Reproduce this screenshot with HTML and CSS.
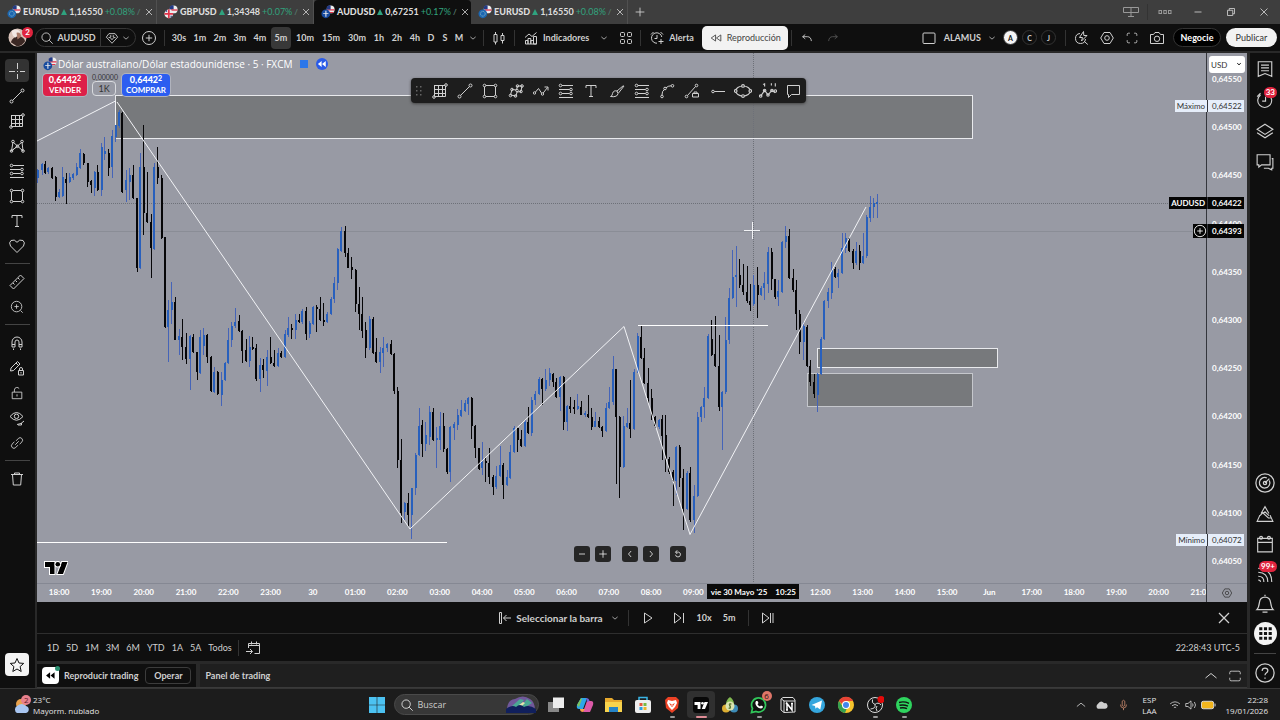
FILE: index.html
```html
<!DOCTYPE html>
<html lang="es">
<head>
<meta charset="utf-8">
<title>AUDUSD</title>
<link rel="stylesheet" href="styles.css">
</head>
<body>
<svg class="defs" aria-hidden="true">
  <defs>
    <symbol id="close" viewBox="0 0 16 16"><path d="M4 4l8 8M12 4l-8 8"/></symbol>
    <symbol id="plus" viewBox="0 0 16 16"><path d="M8 3v10M3 8h10"/></symbol>
    <symbol id="minus" viewBox="0 0 16 16"><path d="M4 8h8"/></symbol>
    <symbol id="down" viewBox="0 0 16 16"><path d="M4.500 6.500L8 9.500l3.500-3"/></symbol>
    <symbol id="up" viewBox="0 0 16 16"><path d="M2.500 10L8 5.500l5.500 4.500"/></symbol>
    <symbol id="left" viewBox="0 0 16 16"><path d="M9.500 4L6 8l3.500 4"/></symbol>
    <symbol id="right" viewBox="0 0 16 16"><path d="M6.500 4L10 8l-3.500 4"/></symbol>
    <symbol id="reset" viewBox="0 0 16 16"><path d="M5 5.500h4a3.300 3.300 0 1 1-4.300 3.500M7 3L4.700 5.500 7 8"/></symbol>
    <symbol id="search" viewBox="0 0 16 16"><circle cx="7" cy="7" r="4.800"/><path d="M10.500 10.500l4 4"/></symbol>
    <symbol id="gem" viewBox="0 0 16 16"><path d="M4.500 3h7l3 4L8 14 1.500 7zM4 7.500h2l2 2.500 2-2.500h2M5.500 5.500h1.500M9 5.500h1.500M6 7.500l1-2M10 7.500l-1-2"/></symbol>
    <symbol id="pluscircle" viewBox="0 0 16 16"><circle cx="8" cy="8" r="6.500"/><path d="M8 4.800v6.400M4.800 8h6.400"/></symbol>
    <symbol id="candles" viewBox="0 0 16 16"><path d="M3 4.500h3v7.500H3zM4.500 2v2.500M4.500 12v2.500M10 5.500h3v5h-3zM11.500 3V5.500M11.500 10.500v3"/></symbol>
    <symbol id="indicators" viewBox="0 0 16 16"><path d="M2.500 14v-3.500h2.500v3.500M5 14V8.500h2.800v5.500M7.800 14V10.500h2.700v3.500M10.500 14V6.500h3V14zM2.500 14h11M2 7.500l4-3.500 3 2.500 4.500-4"/></symbol>
    <symbol id="four" viewBox="0 0 16 16"><rect x="2.500" y="2.500" width="4" height="4" rx="1"/><rect x="9.500" y="2.500" width="4" height="4" rx="1"/><rect x="2.500" y="9.500" width="4" height="4" rx="1"/><rect x="9.500" y="9.500" width="4" height="4" rx="1"/></symbol>
    <symbol id="alarm" viewBox="0 0 16 16"><path d="M12.800 7A5.200 5.200 0 1 0 8 13.200M8 5v3.500H5.500M2 4.500L4.500 2M11.500 2L14 4.500M12 9v5M9.500 11.500h5"/></symbol>
    <symbol id="rewind" viewBox="0 0 16 16"><path d="M7.500 4.500v7L2.500 8zM13.500 4.500v7L8.500 8z"/></symbol>
    <symbol id="undo" viewBox="0 0 16 16"><path d="M6 4L3 6.500 6 9M3 6.500h5.500Q12.500 6.500 13 11.500"/></symbol>
    <symbol id="redo" viewBox="0 0 16 16"><path d="M10 4l3 2.500L10 9M13 6.500H7.500Q3.500 6.500 3 11.500"/></symbol>
    <symbol id="layout" viewBox="0 0 16 16"><rect x="2" y="3" width="12" height="10.500" rx="1"/></symbol>
    <symbol id="quick" viewBox="0 0 16 16"><path d="M6 3.500A5 5 0 1 0 11.500 9M10.300 11.500l3.500 3M9.500 1.500L5.500 7.500h3l-1 3.500L13 5.500h-3.200z"/></symbol>
    <symbol id="hex" viewBox="0 0 16 16"><path d="M5 2.500h6L14.300 8 11 13.500H5L1.700 8z"/><circle cx="8" cy="8" r="2.300"/></symbol>
    <symbol id="full" viewBox="0 0 16 16"><path d="M2.500 5.500V4q0-1.500 1.500-1.500h1.500M10.500 2.500H12q1.500 0 1.500 1.500v1.500M13.500 10.500V12q0 1.500-1.500 1.500h-1.500M5.500 13.500H4q-1.500 0-1.500-1.500v-1.500"/></symbol>
    <symbol id="camera" viewBox="0 0 16 16"><path d="M1.500 4.500h3L6 2.500h4l1.500 2h3v9h-13z"/><circle cx="8" cy="8.800" r="2.700"/></symbol>
    <symbol id="cross" viewBox="0 0 16 16"><path d="M8.500 0v6M8.500 11v5M0 8.500h6M11 8.500h5M8 8.500h1"/></symbol>
    <symbol id="trend" viewBox="0 0 16 16"><circle cx="2.500" cy="13.500" r="1.500"/><circle cx="13.500" cy="2.500" r="1.500"/><path d="M3.600 12.400l8.800-8.800"/></symbol>
    <symbol id="gridtool" viewBox="0 0 16 16"><path d="M2.500 2v11.500M2.500 2.500H13M2.500 13.500h11V3M6.500 2.500v11M10.500 2.500v11M2.500 6.500h11M2.500 10.500h11"/><circle cx="14" cy="2" r="1.300"/><circle cx="2" cy="14" r="1.300"/></symbol>
    <symbol id="pattern" viewBox="0 0 16 16"><path d="M2.500 13L4 4l4.500 4L13 4l1 9-5.500-5zM2.500 13l6-5"/><circle cx="4" cy="3.500" r="1.300"/><circle cx="13" cy="3.500" r="1.300"/><circle cx="2.500" cy="13" r="1.300"/><circle cx="14" cy="13" r="1.300"/><circle cx="8.500" cy="8.300" r="1.300"/></symbol>
    <symbol id="fib" viewBox="0 0 16 16"><path d="M4 2.500h11M1 6.500h10.500M4 10.500h7.500M1 14.500h14"/><circle cx="2.500" cy="2.500" r="1.300"/><circle cx="13" cy="6.500" r="1.300"/><circle cx="2.500" cy="10.500" r="1.300"/><circle cx="13" cy="10.500" r="1.300"/></symbol>
    <symbol id="rect" viewBox="0 0 16 16"><rect x="2.500" y="2.500" width="11" height="11"/><g class="knob"><circle cx="2.500" cy="2.500" r="1.300"/><circle cx="13.500" cy="2.500" r="1.300"/><circle cx="2.500" cy="13.500" r="1.300"/><circle cx="13.500" cy="13.500" r="1.300"/></g></symbol>
    <symbol id="text" viewBox="0 0 16 16"><path d="M3 5V2.500h10V5M8 2.500v11M6 13.500h4"/></symbol>
    <symbol id="heart" viewBox="0 0 16 16"><path d="M8 14.500L1.500 8Q-.5 4.500 2 2.500 5.500.8 8 4.300 10.500.8 14 2.500 16.500 4.500 14.500 8z"/></symbol>
    <symbol id="ruler" viewBox="0 0 16 16"><path d="M1 11.500L11.500 1 15 4.500 4.500 15zM4 9l1.500 1.500M6.500 6.500L8 8M9 4l1.500 1.500"/></symbol>
    <symbol id="zoomin" viewBox="0 0 16 16"><circle cx="7.500" cy="7.500" r="6"/><path d="M12 12l2.500 2.500M7.500 5v5M5 7.500h5"/></symbol>
    <symbol id="magnet" viewBox="0 0 16 16"><path d="M3 12V7a5 5 0 0 1 10 0v5h-3V7a2 2 0 0 0-4 0v5zM3 9.500h3M10 9.500h3M4.500 13.500V15M11.500 13.500V15"/></symbol>
    <symbol id="pencillock" viewBox="0 0 16 16"><path d="M1.500 11L2 8l6.500-6.500 2.500 2.500L4.500 10.500zM7 3l2.500 2.500M9.500 10.500h5V15h-5zM10.500 10.500V9a1.500 1.500 0 0 1 3 0v1.500M12 12v1.500"/></symbol>
    <symbol id="lock" viewBox="0 0 16 16"><path d="M2.500 7h11v7.500h-11zM5 7V4.500a3 3 0 0 1 5.500-1.500M8 9.500V12"/></symbol>
    <symbol id="eye" viewBox="0 0 16 16"><path d="M1 6.500Q7.500-1.500 14 6.500 7.500 14 1 6.500zM8 14.500l4-1 3-2.500M9 15h3.500v-2"/><circle cx="7.500" cy="6.300" r="2.200"/></symbol>
    <symbol id="link" viewBox="0 0 16 16"><path d="M7 5.500l2.500-2.700a2.700 2.700 0 0 1 4 4L11 9.500M9 10.500l-2.500 2.700a2.700 2.700 0 0 1-4-4L5 6.500M6 10l4-4"/></symbol>
    <symbol id="trash" viewBox="0 0 16 16"><path d="M2 3.500h12M5.500 3.500V2h5v1.500M3.500 3.500l.8 10.500h7.400l.8-10.500"/></symbol>
    <symbol id="star" viewBox="0 0 16 16"><path d="M8 1.500l2 4.500 4.700.4-3.600 3.200 1.100 4.900L8 12l-4.200 2.500 1.100-4.900L1.300 6.400 6 6z"/></symbol>
    <symbol id="gann" viewBox="0 0 16 16"><path d="M2.500 12L4 6.500l4.500.5 1-4h4.500l-1 5.500-4 .5-1 4z"/><circle cx="2.500" cy="12.500" r="1.300"/><circle cx="4" cy="6.500" r="1.300"/><circle cx="9" cy="7.500" r="1.300"/><circle cx="9.500" cy="3" r="1.300"/><circle cx="14" cy="3" r="1.300"/><circle cx="13" cy="8.500" r="1.300"/><circle cx="7.500" cy="13" r="1.300"/></symbol>
    <symbol id="zig" viewBox="0 0 16 16"><circle cx="1.500" cy="10" r="1.200"/><circle cx="9.500" cy="11" r="1.200"/><path d="M2.500 9l3-3.500 3 4.500M10.200 10L14.500 4.500M11.500 4h3.500v3.500"/></symbol>
    <symbol id="brush" viewBox="0 0 16 16"><path d="M1.500 13.500Q3.500 13 3.500 10.500 4.500 7 8 8q2.500 3-.5 5-2.500 1.200-6 .5zM8 8l6.500-5.500M9.500 10L15 3"/></symbol>
    <symbol id="curve" viewBox="0 0 16 16"><circle cx="3" cy="13.500" r="1.300"/><circle cx="6" cy="5.500" r="1.300"/><circle cx="13.500" cy="2.800" r="1.300"/><path d="M3 12Q3 8 5.300 6.500M7 4.800Q9 2.800 12 2.800"/></symbol>
    <symbol id="trendlock" viewBox="0 0 16 16"><circle cx="2.500" cy="13.500" r="1.300"/><circle cx="12.500" cy="2.500" r="1.300"/><path d="M3.500 12.500l8-9M8.500 10.500h6V14h-6zM10 10.500V9h3v1.500"/></symbol>
    <symbol id="hline" viewBox="0 0 16 16"><circle cx="3" cy="8.500" r="1.300"/><path d="M4.300 8.500H15"/></symbol>
    <symbol id="ellipse" viewBox="0 0 16 16"><ellipse cx="8" cy="8" rx="6.500" ry="4.500"/><g class="knob"><circle cx="1.500" cy="8" r="1.200"/><circle cx="14.500" cy="8" r="1.200"/><circle cx="8" cy="3.500" r="1.200"/><circle cx="8" cy="12.500" r="1.200"/></g></symbol>
    <symbol id="waves" viewBox="0 0 16 16"><path d="M1.500 12.500l3.500-5 3 4 3.500-4 3 2M5 1v3M3.500 2h1.500M11 1v2M14.500 1v3"/><circle cx="1.500" cy="12.500" r="1.100"/><circle cx="5" cy="7.500" r="1.100"/><circle cx="8" cy="11.500" r="1.100"/><circle cx="11.500" cy="7.500" r="1.100"/><circle cx="14.500" cy="8" r="1.100"/></symbol>
    <symbol id="note" viewBox="0 0 16 16"><path d="M2.500 2.500h12v9H6.500L3.500 14.500v-3h-1z"/></symbol>
    <symbol id="news" viewBox="0 0 16 16"><path d="M2 1.500h12v13L8 12l-6 2.500zM4.500 4.500h7M4.500 7h7M4.500 9.500h7"/></symbol>
    <symbol id="clock" viewBox="0 0 16 16"><path d="M8.500 5v4H5.500M11.500 3.500A6.200 6.200 0 1 1 4 3.500M1 5l3-3"/></symbol>
    <symbol id="layers" viewBox="0 0 16 16"><path d="M8 2l7 4.500L8 11 1 6.500zM1 9.500L8 14l7-4.500"/></symbol>
    <symbol id="chat" viewBox="0 0 16 16"><path d="M1 1.500h11.500v9H5L2.500 12.500v-2H1zM14 5h1v8.500h-1V15l-3-1.500H7"/></symbol>
    <symbol id="target" viewBox="0 0 16 16"><circle cx="8" cy="8" r="7.300"/><path d="M11.500 6A4.200 4.200 0 1 1 9.500 4M8 8l3.500-3.500"/><circle cx="8" cy="8" r="1.300"/></symbol>
    <symbol id="pine" viewBox="0 0 16 16"><path d="M4.500 7.500L8 1.500l3.500 6M3.500 9l-2.500 5.500h14L12.500 9M3.500 9.500L6 7l5 4.500h2.500M6.500 7.500L8 6l3.500 3.500"/></symbol>
    <symbol id="cal" viewBox="0 0 16 16"><path d="M1.500 3h13v12h-13zM1.500 6.500h13"/><circle cx="4.500" cy="2.500" r="1.300"/><circle cx="11.500" cy="2.500" r="1.300"/></symbol>
    <symbol id="stream" viewBox="0 0 16 16"><path d="M2 13.500a1.500 1.500 0 0 1 2 1.500M2 10q5 0 5 5M2 6.500q8.500.5 8.500 8.500M2 3q12 .5 12 12"/></symbol>
    <symbol id="bell" viewBox="0 0 16 16"><path d="M1.500 12.500h13Q13 11 12.500 7 12 2.500 8 2.500T3.500 7Q3 11 1.500 12.500zM6 14.500h4M7.500 1h1"/></symbol>
    <symbol id="help" viewBox="0 0 16 16"><circle cx="8" cy="8" r="7.300"/><path d="M5.700 6.300Q5.800 4 8 4t2.300 2q0 1.200-1.300 2-1 .6-1 1.700M8 11.500v1"/></symbol>
    <symbol id="play" viewBox="0 0 16 16"><path d="M4.500 3v10L12 8z"/></symbol>
    <symbol id="step" viewBox="0 0 16 16"><path d="M3.500 3v10L10 8zM12.500 3v10"/></symbol>
    <symbol id="toend" viewBox="0 0 16 16"><path d="M2.500 3v10L9 8zM10.500 3v10M13 3v10"/></symbol>
    <symbol id="selbar" viewBox="0 0 16 16"><path d="M2.500 2.500h2v11h-2zM6.500 8H14M9.500 5L6.500 8l3 3"/></symbol>
    <symbol id="goto" viewBox="0 0 16 16"><path d="M3.500 8V3.500h11v10H9.500M3.500 5.500h11M6.500 1.500v3M11.500 1.500v3M1 11.500h6M5 9l2.500 2.500L5 14"/></symbol>
    <symbol id="maximize" viewBox="0 0 16 16"><path d="M2 6V4q0-1.500 1.500-1.500H5.500M10.500 2.500h2Q14 2.500 14 4v2M14 10v2q0 1.500-1.500 1.500h-2M5.500 13.500h-2Q2 13.500 2 12v-2M5.500 2.500h5M5.500 13.500h5"/></symbol>
    <symbol id="tv" viewBox="0 0 24 14"><path class="solid" d="M1 1h9.500v12H6V6H1zM18 1h5.500L19 13h-5.500z"/><circle class="solid" cx="13.800" cy="3.200" r="2.300"/></symbol>
    <symbol id="pair" viewBox="0 0 16 16"><circle class="f-white" cx="11" cy="5" r="4.500"/><path class="f-red" d="M8 1.800h5M7 4.800h8.500v1.500H7zM9 8h5v1.200H9z"/><path class="f-navy" d="M6.500 2Q9 0 11 .5V5H6.500z"/><circle class="f-blue" cx="5.500" cy="10" r="5"/><path class="f-white" d="M5 6.500h1.200v7H5zM2.500 9.300h6v1h-6z"/></symbol>
    <symbol id="pairgbp" viewBox="0 0 16 16"><circle class="f-white" cx="11" cy="5" r="4.500"/><path class="f-navy" d="M6.500 2Q9 0 11 .5V5H6.500z"/><path class="f-red" d="M8 5h7.500v1.500H8z"/><circle class="f-white" cx="5.500" cy="10" r="5"/><path class="f-red" d="M4.500 5h2v10h-2zM.5 9h10v2H.5z"/><path class="f-navy" d="M1.500 7l2-1.500V8zM7.500 12v2.500l2-2z"/></symbol>
    <symbol id="paireur" viewBox="0 0 16 16"><circle class="f-white" cx="11" cy="5" r="4.500"/><path class="f-navy" d="M6.500 2Q9 0 11 .5V5H6.500z"/><path class="f-red" d="M8 5h7.500v1.500H8z"/><circle class="f-eu" cx="5.500" cy="10" r="5"/><circle class="stars" cx="5.500" cy="10" r="2.700"/></symbol>
  </defs>
</svg>

<nav class="tabs">
  <div class="tab"><svg class="flag"><use href="#paireur"/></svg><b>EURUSD</b><i class="tri"></i><span>1,16550</span><em>+0.08%</em><small>/</small><button aria-label="Cerrar"><svg class="icon s12"><use href="#close"/></svg></button></div>
  <div class="tab"><svg class="flag"><use href="#pairgbp"/></svg><b>GBPUSD</b><i class="tri"></i><span>1,34348</span><em>+0.07%</em><small>/</small><button aria-label="Cerrar"><svg class="icon s12"><use href="#close"/></svg></button></div>
  <div class="tab active"><svg class="flag"><use href="#pair"/></svg><b>AUDUSD</b><i class="tri"></i><span>0,67251</span><em>+0.17%</em><small>/</small><button aria-label="Cerrar"><svg class="icon s12"><use href="#close"/></svg></button></div>
  <div class="tab"><svg class="flag"><use href="#paireur"/></svg><b>EURUSD</b><i class="tri"></i><span>1,16550</span><em>+0.08%</em><small>/</small><button aria-label="Cerrar"><svg class="icon s12"><use href="#close"/></svg></button></div>
  <button class="newtab" aria-label="Nueva pestaña"><svg class="icon s14"><use href="#plus"/></svg></button>
  <div class="window">
    <button aria-label="Paneles"><svg class="icon s16 dim" viewBox="0 0 16 16"><path d="M.5 3.500h15v5H.5zM8 3.500v9M5 12.500h6"/></svg></button><i class="vsep"></i>
    <button aria-label="Más"><svg class="icon s16 dim" viewBox="0 0 16 16"><rect x="2" y="6.500" width="2.500" height="3"/><rect x="6.800" y="6.500" width="2.500" height="3"/><rect x="11.500" y="6.500" width="2.500" height="3"/></svg></button>
    <button aria-label="Minimizar"><svg class="icon s14"><use href="#minus"/></svg></button>
    <button aria-label="Restaurar"><svg class="icon s14" viewBox="0 0 16 16"><path d="M4 6h6v6H4zM6 6V4h6v6h-2"/></svg></button>
    <button aria-label="Cerrar ventana"><svg class="icon s14"><use href="#close"/></svg></button>
  </div>
</nav>

<header class="toolbar">
  <button class="avatar" aria-label="Perfil"><svg viewBox="0 0 20 20"><circle cx="10" cy="10" r="9.500" fill="#d8c2b8"/><path d="M3 15Q5 9 11 9t7 5Q14 20 9 19z" fill="#3b2824"/><path d="M4 3Q9-.5 13 4L8 10Q4 9 4 3z" fill="#f2e8e4"/><path d="M9 5q4-1 5 4l-4 3z" fill="#a87867"/></svg><span class="badge">2</span></button>
  <div class="symbol"><button class="find"><svg class="icon s14"><use href="#search"/></svg>AUDUSD</button><button class="gem" aria-label="Producto"><svg class="icon s14"><use href="#gem"/></svg><svg class="icon s12"><use href="#down"/></svg></button></div>
  <button class="ib" aria-label="Añadir"><svg class="icon s16"><use href="#pluscircle"/></svg></button><i class="vsep"></i>
  <button class="tf">30s</button><button class="tf">1m</button><button class="tf">2m</button><button class="tf">3m</button><button class="tf">4m</button><button class="tf on">5m</button><button class="tf l">10m</button><button class="tf l">15m</button><button class="tf l">30m</button><button class="tf h">1h</button><button class="tf h">2h</button><button class="tf h">4h</button><button class="tf d">D</button><button class="tf d">S</button><button class="tf d">M</button><button class="tf d" aria-label="Intervalos"><svg class="icon s12"><use href="#down"/></svg></button>
  <i class="vsep"></i><button class="ib big" aria-label="Velas"><svg class="icon s16"><use href="#candles"/></svg></button><i class="vsep flush"></i>
  <button class="ind"><svg class="icon s16"><use href="#indicators"/></svg>Indicadores</button><button class="ib sm" aria-label="Favoritos"><svg class="icon s12"><use href="#down"/></svg></button><button class="ib sm" aria-label="Plantillas"><svg class="icon s16"><use href="#four"/></svg></button><i class="vsep"></i>
  <button class="alert"><svg class="icon s16"><use href="#alarm"/></svg>Alerta</button>
  <button class="replay"><svg class="icon s14"><use href="#rewind"/></svg>Reproducción</button><i class="vsep"></i>
  <button class="ib big" aria-label="Deshacer"><svg class="icon s14"><use href="#undo"/></svg></button><button class="ib sm dim" aria-label="Rehacer"><svg class="icon s14"><use href="#redo"/></svg></button>
  <div class="right">
    <button class="ib" aria-label="Diseño"><svg class="icon s16"><use href="#layout"/></svg></button><button class="name">ALAMUS</button><button class="ib xs" aria-label="Diseños"><svg class="icon s12"><use href="#down"/></svg></button>
    <button class="dot on">A</button><button class="dot">C</button><button class="dot">J</button><i class="vsep"></i>
    <button class="ib" aria-label="Búsqueda rápida"><svg class="icon s16"><use href="#quick"/></svg></button><button class="ib" aria-label="Ajustes"><svg class="icon s16"><use href="#hex"/></svg></button><button class="ib" aria-label="Pantalla completa"><svg class="icon s14"><use href="#full"/></svg></button><button class="ib" aria-label="Captura"><svg class="icon s16"><use href="#camera"/></svg></button>
    <button class="trade">Negocie</button><button class="publish">Publicar</button>
  </div>
</header>

<div class="work">
  <aside class="tools">
    <button class="on" aria-label="Cursor"><svg class="icon s16"><use href="#cross"/></svg></button>
    <button aria-label="Líneas"><svg class="icon s16"><use href="#trend"/></svg></button>
    <button aria-label="Gann"><svg class="icon s16"><use href="#gridtool"/></svg></button>
    <button aria-label="Patrones"><svg class="icon s16"><use href="#pattern"/></svg></button>
    <button aria-label="Fibonacci"><svg class="icon s16"><use href="#fib"/></svg></button>
    <button aria-label="Formas"><svg class="icon s16"><use href="#rect"/></svg></button>
    <button aria-label="Texto"><svg class="icon s16"><use href="#text"/></svg></button>
    <button aria-label="Iconos"><svg class="icon s16"><use href="#heart"/></svg></button>
    <hr>
    <button aria-label="Regla"><svg class="icon s16"><use href="#ruler"/></svg></button>
    <button aria-label="Acercar"><svg class="icon s14"><use href="#zoomin"/></svg></button>
    <hr>
    <button aria-label="Imán"><svg class="icon s16"><use href="#magnet"/></svg></button>
    <button aria-label="Modo dibujo"><svg class="icon s16"><use href="#pencillock"/></svg></button>
    <button aria-label="Bloquear"><svg class="icon s14"><use href="#lock"/></svg></button>
    <button aria-label="Ocultar"><svg class="icon s16"><use href="#eye"/></svg></button>
    <button aria-label="Enlazar"><svg class="icon s14"><use href="#link"/></svg></button>
    <hr>
    <button aria-label="Eliminar"><svg class="icon s16"><use href="#trash"/></svg></button>
    <button class="fav" aria-label="Favoritos"><svg class="icon s16"><use href="#star"/></svg></button>
  </aside>

  <main class="center">
    <section class="chart">
      <div class="pane">
        <svg id="plot" viewBox="37 53 1169 530" preserveAspectRatio="none">
          <g class="zone"><rect x="115.500" y="95.500" width="857" height="43"/><rect x="817.500" y="348.500" width="180" height="19"/><rect class="soft" x="807.500" y="373.500" width="165" height="33"/></g>
          <path class="guide" d="M37 203.500H1206"/><path class="guide faint" d="M37 231.500H1206"/><path class="guide" d="M753.500 53V583"/>
          <g id="bars"></g>
          <path class="draw" d="M37 141L115.500 101V125M117 102L410 529 624 326.500 690 534.500 866 207"/>
          <path class="draw strong" d="M37 542.500H447M638 325.500H768"/>
          <path class="draw" d="M744 230.500H760M752.500 222V239"/>
        </svg>
        <div class="legend"><svg class="flag"><use href="#pair"/></svg><h1>Dólar australiano/Dólar estadounidense · 5 · FXCM</h1><i class="mark"></i><i class="round"><svg viewBox="0 0 16 16"><path d="M7.500 4v8L2.500 8zM13 4v8L8 8z" fill="#fff"/></svg></i></div>
        <div class="order"><button class="sell"><b>0,6442<sup>2</sup></b>VENDER</button><div class="spread"><span>0,00000</span><button>1K</button></div><button class="buy"><b>0,6442<sup>2</sup></b>COMPRAR</button></div>
        <div class="favbar"><svg class="grip" viewBox="0 0 8 12"><path d="M1 1h1.500v1.500H1zM5 1h1.500v1.500H5zM1 5h1.500v1.500H1zM5 5h1.500v1.500H5zM1 9h1.500v1.500H1zM5 9h1.500v1.500H5z"/></svg>
          <button aria-label="Gann"><svg class="icon s16"><use href="#gridtool"/></svg></button><button aria-label="Tendencia"><svg class="icon s16"><use href="#trend"/></svg></button><button aria-label="Rectángulo"><svg class="icon s16"><use href="#rect"/></svg></button><button aria-label="Trazado"><svg class="icon s16"><use href="#gann"/></svg></button><button aria-label="Ruta"><svg class="icon s16"><use href="#zig"/></svg></button><button aria-label="Retroceso"><svg class="icon s16"><use href="#fib"/></svg></button><button aria-label="Texto"><svg class="icon s16"><use href="#text"/></svg></button><button aria-label="Pincel"><svg class="icon s16"><use href="#brush"/></svg></button><button aria-label="Extensión"><svg class="icon s16"><use href="#fib"/></svg></button><button aria-label="Curva"><svg class="icon s16"><use href="#curve"/></svg></button><button aria-label="Ángulo"><svg class="icon s16"><use href="#trendlock"/></svg></button><button aria-label="Horizontal"><svg class="icon s16"><use href="#hline"/></svg></button><button aria-label="Elipse"><svg class="icon s18"><use href="#ellipse"/></svg></button><button aria-label="Ondas"><svg class="icon s18"><use href="#waves"/></svg></button><button aria-label="Nota"><svg class="icon s16"><use href="#note"/></svg></button>
        </div>
        <div class="nav"><button aria-label="Alejar"><svg class="icon s12"><use href="#minus"/></svg></button><button aria-label="Acercar"><svg class="icon s12"><use href="#plus"/></svg></button><button class="gap" aria-label="Izquierda"><svg class="icon s12"><use href="#left"/></svg></button><button aria-label="Derecha"><svg class="icon s12"><use href="#right"/></svg></button><button class="gap" aria-label="Restablecer"><svg class="icon s12"><use href="#reset"/></svg></button></div>
        <svg class="logo"><use href="#tv"/></svg>
      </div>
      <div class="prices">
        <span>0,64550</span><span>0,64500</span><span>0,64450</span><span>0,64400</span><span>0,64350</span><span>0,64300</span><span>0,64250</span><span>0,64200</span><span>0,64150</span><span>0,64100</span><span>0,64050</span>
        <select aria-label="Moneda"><option>USD</option></select>
        <svg class="caret" viewBox="0 0 16 16"><use href="#down"/></svg>
        <div class="tag high"><span>Máximo</span><b>0,64522</b></div>
        <div class="tag dark last"><span>AUDUSD</span><b>0,64422</b></div>
        <div class="tag dark hover"><span><svg class="icon s14"><use href="#pluscircle"/></svg></span><b>0,64393</b></div>
        <div class="tag low"><span>Mínimo</span><b>0,64072</b></div>
      </div>
      <div class="times"><div class="hours"><span>18:00</span><span>19:00</span><span>20:00</span><span>21:00</span><span>22:00</span><span>23:00</span><span>30</span><span>01:00</span><span>02:00</span><span>03:00</span><span>04:00</span><span>05:00</span><span>06:00</span><span>07:00</span><span>08:00</span><span>09:00</span><span></span><span></span><span>12:00</span><span>13:00</span><span>14:00</span><span>15:00</span><span>Jun</span><span>17:00</span><span>18:00</span><span>19:00</span><span>20:00</span><span>21:00</span></div><div class="now"><span>vie 30 Mayo '25</span><span>10:25</span></div></div>
      <button class="corner" aria-label="Ajustes del eje"><svg class="icon s12"><use href="#hex"/></svg></button>
    </section>

    <section class="playbar">
      <div class="group"><button class="sel"><svg class="icon s16"><use href="#selbar"/></svg>Seleccionar la barra</button><button class="ib" aria-label="Opciones"><svg class="icon s12"><use href="#down"/></svg></button><i class="vsep"></i><button class="ib wider" aria-label="Reproducir"><svg class="icon s16"><use href="#play"/></svg></button><button class="ib" aria-label="Avanzar"><svg class="icon s16"><use href="#step"/></svg></button><button class="ib">10x</button><button class="ib">5m</button><i class="vsep late"></i><button class="ib wider" aria-label="Ir al final"><svg class="icon s16"><use href="#toend"/></svg></button></div>
      <button class="x" aria-label="Cerrar"><svg class="icon s20"><use href="#close"/></svg></button>
    </section>
    <section class="ranges"><button>1D</button><button>5D</button><button>1M</button><button>3M</button><button>6M</button><button>YTD</button><button>1A</button><button>5A</button><button>Todos</button><i class="vsep"></i><button aria-label="Ir a"><svg class="icon s16"><use href="#goto"/></svg></button><time>22:28:43 UTC-5</time></section>
    <section class="panels"><div class="p1"><i class="app"><svg viewBox="0 0 16 16"><path d="M7.500 4v8L2.500 8zM13 4v8L8 8z"/></svg></i>Reproducir trading<button>Operar</button></div><div class="p2">Panel de trading</div><div class="p3"><button aria-label="Abrir"><svg class="icon s16"><use href="#up"/></svg></button><button aria-label="Maximizar"><svg class="icon s14"><use href="#maximize"/></svg></button></div></section>
  </main>

  <aside class="side">
    <button aria-label="Lista"><svg class="icon s18"><use href="#news"/></svg></button>
    <button aria-label="Alertas"><svg class="icon s18"><use href="#clock"/></svg><span class="badge">33</span></button>
    <button aria-label="Objetos"><svg class="icon s18"><use href="#layers"/></svg></button>
    <button aria-label="Chat"><svg class="icon s18"><use href="#chat"/></svg></button>
    <button class="push" aria-label="Filtro"><svg class="icon s20"><use href="#target"/></svg></button>
    <button aria-label="Pine"><svg class="icon s18"><use href="#pine"/></svg></button>
    <button aria-label="Calendario"><svg class="icon s18"><use href="#cal"/></svg></button>
    <button aria-label="Transmisiones"><svg class="icon s18"><use href="#stream"/></svg><span class="badge">99+</span></button>
    <button aria-label="Avisos"><svg class="icon s20"><use href="#bell"/></svg></button>
    <button aria-label="Productos"><svg class="apps" viewBox="0 0 22 22"><circle cx="11" cy="11" r="11" fill="#f4f4f4"/><path fill="#111" d="M5 5h3v3H5zM9.500 5h3v3h-3zM14 5h3v3h-3zM5 9.500h3v3H5zM9.500 9.500h3v3h-3zM14 9.500h3v3h-3zM5 14h3v3H5zM9.500 14h3v3h-3zM14 14h3v3h-3z"/></svg></button>
    <hr>
    <button aria-label="Ayuda"><svg class="icon s20"><use href="#help"/></svg></button>
  </aside>
</div>

<footer class="taskbar">
  <div class="weather"><svg viewBox="0 0 20 20"><circle cx="9" cy="9" r="5" fill="#e8a24d"/><path d="M5 18a4 4 0 0 1 0-7q5-4 9 0a3.600 3.600 0 0 1 0 7z" fill="#a9c6f1"/><circle cx="14" cy="5" r="5" fill="#e8818d"/></svg><span class="count">2</span><p><span>23°C</span><span>Mayorm. nublado</span></p></div>
  <div class="apps-row">
    <button aria-label="Inicio"><svg viewBox="0 0 18 18"><path fill="#4cc2f1" d="M1 1h7.700v7.700H1zM9.300 1H17v7.700H9.300zM1 9.300h7.700V17H1zM9.300 9.300H17V17H9.300z"/></svg></button>
    <label class="search"><svg class="icon s14"><use href="#search"/></svg><input type="text" placeholder="Buscar" aria-label="Buscar"><svg class="aurora" viewBox="0 0 30 17"><path fill="#70589a" d="M1 14Q1 4 9 3q8-5 15 0 5 3 5 11z"/><path fill="#4ba894" d="M6 10L14 3l4 1-7 8zM15 10l6-7 5 4-8 5z"/><path fill="#e7e7b0" d="M13 9l4-3 2 1-4 4z"/><path fill="#101f5c" d="M0 17V13q6-5 10-2 4-4 8 0 5-3 12 2v4z"/></svg></label>
    <button aria-label="Vista de tareas"><svg viewBox="0 0 18 18"><path fill="#888" d="M1 6h11v10H1z"/><path fill="#ededed" d="M6 1.500h11V12H6z"/></svg></button>
    <button aria-label="Copilot"><svg viewBox="0 0 18 18"><path fill="#2da7e8" d="M5 2h6L7 13H3Q0 13 1 9z"/><path fill="#7dc45d" d="M5 2L1 9l2 2 3-8z"/><path fill="#dc5aa8" d="M11 5h4q3 0 2 4l-3 7H7z"/><path fill="#f6a14b" d="M4 13h5l-2 3q-3 0-3-3z"/><path fill="#7362db" d="M10 2q3 0 3.500 3L11 6z"/></svg></button>
    <button aria-label="Explorador"><svg viewBox="0 0 18 18"><path fill="#e7a92d" d="M0 2h7l2 2h8v6H0z"/><path fill="#f8d34d" d="M0 6h17v10H0z"/><path fill="#2684c7" d="M4 11h9v5H4z"/></svg></button>
    <button aria-label="Tienda"><svg viewBox="0 0 18 18"><path fill="none" stroke="#3ab5e5" stroke-width="1.500" d="M5 5V1.500h8V5"/><rect x="1" y="4" width="16" height="13" rx="2" fill="#eee"/><path fill="#e6553c" d="M5.500 7h3v3h-3z"/><path fill="#79b843" d="M9.500 7h3v3h-3z"/><path fill="#2b9ee0" d="M5.500 11h3v3h-3z"/><path fill="#eab52d" d="M9.500 11h3v3h-3z"/></svg></button>
    <button class="run" aria-label="Brave"><svg viewBox="0 0 18 18"><path fill="#ed4225" d="M5 1h8l3 3-1 8-6 5-6-5-1-8z"/><path fill="#fff" d="M5 4l4 1 4-1 1 3-2 4-3 3-3-3-2-4z"/><path fill="#ed4225" d="M6 7l2 1v2zM12 7l-2 1v2zM8.500 8h1v3h-1z"/></svg></button>
    <button class="run now-app" aria-label="TradingView"><svg viewBox="0 0 18 18"><rect x="1" y="1" width="16" height="16" rx="3" fill="#080808"/><path fill="#fff" d="M2.500 6h6v7H5.600V9H2.500zM12.500 6h3.500l-3 7H9.800z"/><circle cx="10.500" cy="7.300" r="1.300" fill="#fff"/></svg></button>
    <button aria-label="Metatrader"><svg viewBox="0 0 18 18"><circle cx="5" cy="12.500" r="4" fill="#dcae32"/><circle cx="13" cy="12.500" r="4" fill="#3d8cb8"/><path fill="#83ba52" d="M9 1q4 3 4 7H5q0-4 4-7z"/><circle cx="9" cy="10" r="4.500" fill="#dbe4b0"/><path d="M10.500 8H8.500q-1 1 .5 2t0 2.200H7.500M9 7v6" stroke="#56732f" fill="none"/></svg></button>
    <button class="run" aria-label="WhatsApp"><svg viewBox="0 0 18 18"><path fill="#111" stroke="#31c65a" stroke-width="1.700" d="M1.500 16.500l1-4A7 7 0 1 1 6 15.500z"/><path fill="#fff" d="M6 5l1.500 0L8.500 7l-1 1.200q1 1.700 2.500 2.200l1-1 2 1q0 2-2 2Q6 12 5.300 7z"/></svg><span class="count">6</span></button>
    <button aria-label="Notion"><svg viewBox="0 0 18 18"><path fill="#151515" stroke="#ddd" d="M2 3l2-1.500h10L16 4v12L5 16.500 2 14z"/><path fill="none" stroke="#ddd" d="M2.500 3L5 5v11.500M5 5h11"/><path fill="none" stroke="#fff" stroke-width="1.500" d="M8 14V7.500l5 6.500V7.500M6.700 7.500h2M12 7.500h2M7 14h2"/></svg></button>
    <button aria-label="Telegram"><svg viewBox="0 0 18 18"><circle cx="9" cy="9" r="8" fill="#35a6dd"/><path fill="#fff" d="M3.500 9L14 4.500 12.300 13.500 9 11.200 7.500 12.800 7 10z"/></svg></button>
    <button aria-label="Chrome"><svg viewBox="0 0 18 18"><circle cx="9" cy="9" r="8" fill="#f6c42d"/><path fill="#e74335" d="M2 5a8 8 0 0 1 14 0H9L6 9z"/><path fill="#34a050" d="M2 5l4 6 4 1-2 5A8 8 0 0 1 2 5z"/><circle cx="9" cy="9" r="4" fill="#fff"/><circle cx="9" cy="9" r="3" fill="#4286ed"/></svg></button>
    <button class="run" aria-label="OBS"><svg viewBox="0 0 18 18"><circle cx="9" cy="9" r="7.500" fill="#171717" stroke="#ddd"/><path fill="none" stroke="#ddd" d="M9 8.500Q5 7 6.500 3.500M9 8.500q3-3 6 .5M9 8.500q1 4-4.500 4.500M11 15q-2-3 0-5"/><circle cx="15" cy="3.500" r="3.500" fill="#e50a0a"/></svg></button>
    <button class="run" aria-label="Spotify"><svg viewBox="0 0 18 18"><circle cx="9" cy="9" r="8" fill="#2ed45e"/><path fill="none" stroke="#111" stroke-width="1.400" d="M4 6.500q5-1.500 10 .8M4.500 9.300q4.500-1 8.500.8M5 12q4-.8 7 .6"/></svg></button>
  </div>
  <div class="tray"><svg class="icon s12"><use href="#up"/></svg><svg class="pic first" viewBox="0 0 14 12"><path fill="#cfcfcf" d="M3 10a3 3 0 0 1 0-5q3-5 7-1a3 3 0 0 1 1 6z"/></svg><svg class="pic" viewBox="0 0 14 14"><path fill="none" stroke="#c4866b" d="M5.500 2.500q1.500-2 3 0v5q-1.500 2-3 0zM3.500 6.500q0 4 3.500 4t3.500-4M7 10.500V13"/></svg><p><span>ESP</span><span>LAA</span></p><svg class="icon s12" viewBox="0 0 16 16"><path d="M1.500 6.500q6.500-5.500 13 0M4 9q4-3.500 8 0M6.500 11.500q1.500-1.500 3 0"/></svg><svg class="icon s12" viewBox="0 0 16 16"><path d="M1 6h3l4-3.500v11L4 10H1zM10 6q1.500 2 0 4M12.500 4q3 4 0 8"/></svg><svg class="bat" viewBox="0 0 16 10"><rect x=".5" y="1" width="13" height="8" rx="2" fill="#f2b51d" stroke="#ddd"/><path d="M15 3.500v3" stroke="#ddd"/></svg><p class="date"><span>22:28</span><span>19/01/2026</span></p></div>
</footer>
<script src="chart.js"></script>
</body>
</html>
```
FILE: styles.css
```css
* { box-sizing: border-box; }
html, body { height: 100%; }
body { margin: 0; display: flex; flex-direction: column; background: #0f0f0f; color: #d0d0d0; font: 700 9px/12px Lato, "Open Sans", sans-serif; overflow: hidden; }
button { font: inherit; color: inherit; background: none; border: 0; padding: 0; margin: 0; display: flex; align-items: center; justify-content: center; white-space: nowrap; flex: none; }
.defs { position: absolute; width: 0; height: 0; }
svg { display: block; flex: none; }
.icon { fill: none; stroke: currentColor; stroke-width: 1; }
.s12 { width: 12px; height: 12px; } .s14 { width: 14px; height: 14px; } .s16 { width: 16px; height: 16px; } .s18 { width: 18px; height: 18px; } .s20 { width: 20px; height: 20px; }
.dim { color: #7d7d7d; }
.knob { fill: #141414; }
.solid { fill: #000; stroke: #fff; stroke-width: 2; paint-order: stroke; }
.f-white { fill: #eee; stroke: none; } .f-red { fill: #e0344b; stroke: none; } .f-navy { fill: #233a86; stroke: none; } .f-blue { fill: #164a9e; stroke: none; } .f-eu { fill: #1c66b0; stroke: none; }
.stars { fill: none; stroke: #9fc5c9; stroke-dasharray: 1 1; }
.flag { width: 14px; height: 14px; }
.vsep { width: 1px; height: 16px; background: #333; flex: none; }
.badge { position: absolute; background: #e0243e; color: #fff; border-radius: 6px; font-size: 8px; line-height: 11px; min-width: 11px; padding: 0 2px; text-align: center; }

.tabs { display: flex; height: 24px; background: #3e3e3e; flex: none; }
.tab { display: flex; flex: none; align-items: center; width: 157px; padding: 0 3px 0 7px; border-right: 1px solid #505050; font-size: 9px; gap: 2px; white-space: nowrap; color: #ddd; }
.tab.active { background: #0f0f0f; border-radius: 4px 4px 0 0; border-color: #0f0f0f; }
.tab em { font-style: normal; font-weight: 400; color: #31a27d; }
.tab small { color: #55756b; font-size: 8px; }
.tab button { margin-left: auto; width: 12px; }
.tri { border: 3px solid transparent; border-bottom: 6px solid #2fa37f; border-top: 0; }
.newtab { width: 24px; }
.window { margin-left: auto; display: flex; align-items: center; }
.window button { width: 33px; color: #ccc; }
.window .dim { color: #999; }

.toolbar { display: flex; align-items: center; height: 29px; border-bottom: 2px solid #292929; flex: none; padding-right: 3px; }
.toolbar > .vsep { margin-left: 3px; } .toolbar > .flush { margin-left: 0; }
.avatar { position: relative; width: 35px; }
.avatar svg { width: 19px; height: 19px; }
.avatar .badge { right: 2px; top: -1px; }
.symbol { display: flex; width: 101px; height: 19px; border: 1px solid #363636; border-radius: 10px; }
.find { flex: 1; gap: 3px; } .gem { width: 35px; border-left: 1px solid #363636; gap: 1px; }
.ib { width: 25px; height: 22px; } .ib.wider { width: 38px; } .ib.big { width: 30px; } .ib.sm { width: 22px; } .ib.xs { width: 18px; }
.toolbar .ib.dim { color: #555; }
.tf { width: 20px; height: 22px; border-radius: 4px; } .vsep + .tf { width: 22px; margin-left: 3px; }
.tf.on { background: #383838; margin: 0 1px; } .tf.l { width: 26px; } .tf.h { width: 18px; } .tf.d { width: 14px; }
.ind { gap: 4px; padding: 0 4px 0 8px; } .alert { gap: 4px; padding: 0 8px; }
.replay { background: #f2f2f2; color: #444; width: 86px; height: 24px; border-radius: 5px; gap: 4px; font-weight: 400; }
.right { margin-left: auto; display: flex; align-items: center; }
.name { padding: 0 2px; }
.dot { width: 15px; height: 15px; margin: 0 2px; border: 1px solid #333; border-radius: 8px; font-size: 7px; }
.dot.on { background: #f5f5f5; color: #111; } .dot + .vsep { margin: 0 3px 0 7px; }
.trade { background: #000; border: 1px solid #333; color: #fff; border-radius: 10px; width: 48px; height: 19px; margin: 0 5px 0 4px; }
.publish { background: #f2f2f2; color: #333; border-radius: 10px; width: 51px; height: 19px; font-weight: 400; }

.work { flex: 1; display: flex; min-height: 0; }
.tools { width: 37px; border-right: 2px solid #292929; display: flex; flex-direction: column; align-items: center; padding: 5px 1px 0 0; flex: none; }
.tools button { width: 24px; height: 25px; border-radius: 4px; }
.tools .on { background: #333; height: 23px; margin: 1px 0; }
.tools hr, .side hr { width: 25px; border: 0; border-top: 1px solid #444; margin: 5px 0; }
.tools .fav { margin-top: auto; margin-bottom: 12px; background: #f4f4f4; color: #111; height: 23px; }
.center { flex: 1; min-width: 0; display: flex; flex-direction: column; border-right: 3px solid #292929; }
.chart { flex: 1; min-height: 0; display: grid; grid-template: minmax(0, 1fr) 19px / minmax(0, 1fr) 41px; background: #989aa4; overflow: hidden; }
.pane { position: relative; }
#plot { position: absolute; width: 100%; height: 100%; }
.zone rect { fill: #77797c; stroke: #e9eaed; } .zone .soft { stroke: #c5c7cc; }
.draw { fill: none; stroke: #f2f3f6; } .draw.strong { stroke-width: 1; stroke: #fff; }
.guide { fill: none; stroke: #6d7078; stroke-dasharray: 1 1; } .guide.faint { stroke: #8a8d96; stroke-dasharray: none; }
.rise { stroke: #2860bd; } .fall { stroke: #060608; }
.wick { stroke-width: 1; } .body { stroke-width: 2; }
.wick.rise { stroke: #4564b8; }
.legend { position: relative; display: flex; align-items: center; gap: 1px; padding: 4px 0 0 6px; color: #fff; }
h1 { font: 500 10px/14px "Open Sans", sans-serif; margin: 0; white-space: nowrap; }
.mark { width: 8px; height: 8px; background: #2c77ea; margin: 0 7px; }
.round { width: 12px; height: 12px; border-radius: 6px; background: #2a5be8; } .round svg { width: 12px; height: 12px; }
.order { position: relative; display: flex; gap: 5px; margin: 3px 0 0 6px; }
.sell, .buy { flex-direction: column; height: 22px; width: 44px; border-radius: 4px; background: #dd2048; color: #fff; font-size: 8px; line-height: 10px; box-shadow: 0 0 0 1px #b0b3bd; }
.buy { background: #2c5df0; width: 48px; }
.order b { font-size: 9px; line-height: 10px; } sup { font-size: 7px; line-height: 0; vertical-align: 2px; }
.spread { width: 25px; color: #333; font-weight: 400; font-size: 7px; line-height: 7px; }
.spread button { width: 24px; height: 15px; border: 1px solid #d8dade; border-radius: 4px; font-size: 9px; }
.favbar { position: absolute; left: 32%; top: 25px; width: 395px; height: 25px; background: #1d1d1d; border-radius: 4px; display: flex; align-items: center; box-shadow: 0 1px 3px #444; }
.favbar button { flex: 1; height: 25px; } .grip { width: 8px; height: 12px; margin: 0 4px; fill: #666; }
.nav { position: absolute; bottom: 21px; left: 0; right: 0; display: flex; justify-content: center; gap: 5px; padding-left: 16px; }
.nav button { width: 16px; height: 16px; background: #262626; border-radius: 3px; color: #fff; } .nav .gap { margin-left: 6px; }
.logo { position: absolute; left: 7px; bottom: 8px; width: 24px; height: 14px; overflow: visible; }
.prices { position: relative; border-left: 1px solid #34363c; color: #fff; font-size: 8px; line-height: 10px; display: flex; flex-direction: column; justify-content: space-between; padding: 21px 0 17px 5px; }
select { position: absolute; left: 2px; top: 3px; width: 36px; height: 17px; border: 0; border-radius: 3px; background: #fff; color: #333; font: 400 8px Lato, sans-serif; appearance: none; padding: 0 2px; }
.caret { position: absolute; right: 4px; top: 7px; width: 8px; height: 8px; fill: none; stroke: #111; stroke-width: 2; }
.tag { position: absolute; right: 3px; display: flex; line-height: 12px; background: #e6eefa; color: #333; white-space: nowrap; }
.tag span { padding: 0 2px; display: flex; align-items: center; } .tag b { width: 37px; padding-left: 4px; border-left: 1px solid #34363c; font-weight: inherit; }
.tag.high, .tag.low { font-weight: 400; }
.tag.dark { background: #050505; color: #fff; } .tag.hover { line-height: 14px; } .tag.hover span { padding: 0; }
.high { top: 47px; } .last { top: 144px; } .hover { top: 171px; } .low { top: 481px; }
.times { position: relative; overflow: hidden; border-top: 1px solid #858893; color: #fff; font-size: 8px; line-height: 17px; }
.hours { display: grid; grid-template-columns: repeat(28, minmax(0, 1fr)); margin: 0 -16px 0 1px; text-align: center; }
.now { position: absolute; left: 57%; top: 0; height: 15px; line-height: 16px; width: 92px; margin-left: 4px; background: #0a0a0a; display: flex; justify-content: center; gap: 8px; }
.corner { border-left: 1px solid #34363c; border-top: 1px solid #858893; color: #333; height: 100%; width: 100%; }

.playbar { display: grid; grid-template-columns: 1fr auto 1fr; align-items: center; height: 32px; border-bottom: 1px solid #2e2e2e; flex: none; }
.group { grid-column: 2; display: flex; align-items: center; } .sel { gap: 3px; font-size: 10px; } .late { margin-left: 6px; }
.playbar .x { justify-self: end; margin-right: 13px; }
.ranges { display: flex; align-items: center; height: 27px; gap: 7px; padding: 0 7px 0 10px; flex: none; font-weight: 400; }
.ranges .vsep { margin-left: -1px; } .ranges .vsep + button { margin-left: -1px; } time { margin-left: auto; }
.panels { display: flex; height: 27px; border-top: 3px solid #292929; border-bottom: 1px solid #3a3a3a; background: #1f1f1f; flex: none; align-items: stretch; }
.p1 { display: flex; align-items: center; background: #0f0f0f; gap: 5px; padding: 0 5px; } .p1 button { border: 1px solid #3c3c3c; border-radius: 4px; width: 46px; height: 17px; margin-left: 2px; }
.p2 { display: flex; align-items: center; padding: 0 5px; border-left: 4px solid #292929; } .p3 { margin-left: auto; display: flex; align-items: center; gap: 9px; margin-right: 5px; }
.app { position: relative; width: 17px; height: 17px; background: #fff; border-radius: 4px; } .app svg { width: 13px; height: 13px; margin: 2px; }
.app::after { content: ""; position: absolute; right: -1px; top: -1px; width: 5px; height: 5px; background: #2b8f70; border-radius: 3px; }
.side { width: 30px; display: flex; flex-direction: column; align-items: center; gap: 1px; flex: none; padding: 1px 0; }
.side button { position: relative; width: 30px; height: 30px; } .side .badge { top: 2px; right: 3px; } .side .push { margin-top: auto; }
.side .push ~ button { height: 29px; } .side hr { margin: 4px 0 3px; width: 22px; } .apps { width: 23px; height: 23px; }

.taskbar { display: grid; grid-template-columns: 1fr auto 1fr; height: 32px; background: #1c1c1c; border-top: 1px solid #353535; align-items: center; flex: none; font: 400 8px/11px "Open Sans", sans-serif; color: #e4e4e4; }
.taskbar p { margin: 0; display: flex; flex-direction: column; }
.weather { position: relative; display: flex; align-items: center; gap: 1px; padding-left: 12px; } .weather > svg { width: 20px; height: 20px; } .weather .count { position: absolute; left: 24px; top: 0; color: #601a28; }
.apps-row { display: flex; align-items: center; gap: 1px; }
.apps-row button { position: relative; width: 28px; height: 27px; border-radius: 4px; } .apps-row button svg { width: 18px; height: 18px; }
.run::after { content: ""; position: absolute; bottom: 0; left: 12px; width: 5px; height: 2px; border-radius: 1px; background: #999; }
.now-app { background: #303030; } .now-app::after { width: 11px; left: 9px; background: #e08c96; }
.apps-row .count { position: absolute; right: 1px; top: 0; width: 10px; line-height: 10px; border-radius: 5px; background: #df7669; color: #33110d; }
.search { display: flex; align-items: center; width: 145px; height: 21px; border: 1px solid #4a4a4a; border-radius: 11px; background: #373737; padding: 0 2px 0 5px; gap: 4px; margin: 0 2px; }
.search input { flex: 1; min-width: 0; background: none; border: 0; padding: 0; font: 400 9px "Open Sans", sans-serif; color: #ddd; } .search input::placeholder { color: #ccc; opacity: 1; } .aurora { width: 30px; height: 17px; }
.tray { display: flex; align-items: center; justify-content: flex-end; gap: 4px; padding-right: 12px; } .pic { width: 13px; height: 12px; margin-left: 5px; } .pic.first { margin-left: 4px; } .tray p { text-align: center; margin: 0 8px 0 8px; } .bat { width: 15px; height: 10px; } .tray .date { text-align: right; margin: 0 0 0 6px; }
```
FILE: chart.js
```js
// Each bar: x, high, body top, body bottom, low, direction (1 rise, 0 fall)
const bars = [
[37.7,169,170,178,183,1],[42,163,164,170,175,1],[45,161,164,173,174,0],[48,167,168,172,174,1],[52.3,167,168,178,179,0],[55.7,176,177,197,201,0],[59,189,192,197,198,1],[62.5,167,177,196,197,1],[66.3,173,179,183,204,0],[69.7,173,177,182,183,1],[73,173,174,178,180,1],[76.7,163,167,175,176,1],[80.3,149,153,168,169,1],[83.7,153,154,163,165,0],[87.7,163,163,182,187,0],[91,180,181,185,193,0],[94.5,171,172,188,196,1],[97.7,165,172,190,191,0],[101.7,143,147,190,196,1],[104.7,137,151,154,160,1],[108.5,149,153,168,176,0],[112.3,130,136,167,178,1],[115.7,118,125,137,142,1],[119,110,112,126,128,1],[122.3,112,113,192,193,0],[126.3,170,180,190,202,1],[129.7,168,175,182,200,1],[133,165,175,198,199,0],[137,198,198,268,272,0],[140.3,153,167,268,269,1],[143.5,125,167,213,235,0],[147,172,213,222,223,0],[151,214,222,248,278,0],[154.3,163,167,249,250,1],[157.7,147,167,178,184,0],[161.7,175,178,238,239,0],[165,237,237,327,328,0],[168.3,300,310,327,362,1],[171.7,282,302,310,324,1],[175.3,297,302,340,340,0],[179,329,336,340,355,1],[182.3,319,337,347,360,0],[186.3,333,347,359,364,0],[190,335,336,359,390,1],[193.3,334,337,352,353,0],[197,352,352,372,380,0],[200.3,330,337,373,374,1],
[203.7,328,335,346,355,1],[207,334,335,357,363,0],[211,356,357,391,392,0],[214.3,367,372,392,393,1],[217.7,371,372,394,395,0],[221.7,372,380,395,406,1],[225,362,363,380,381,1],[228.3,328,340,363,364,1],[231.7,322,326,340,347,1],[235.3,308,322,326,328,1],[239,315,321,331,332,0],[242.3,330,331,351,363,0],[246,339,350,361,362,0],[249.7,336,347,361,367,1],[252.7,337,347,349,350,0],[256.3,344,348,379,381,0],[260.3,358,365,379,392,1],[263.3,359,365,370,378,0],[267,350,357,371,386,1],[270.7,337,357,363,364,0],[274,350,363,366,367,0],[278,348,353,366,367,1],[281,351,353,357,358,0],[285,330,334,357,358,1],[288.3,317,328,335,337,1],[291.7,324,328,330,339,0],[295.7,314,320,330,339,1],[299,314,320,322,323,0],[302.3,309,311,322,324,1],[306.3,307,311,334,340,0],[309.7,321,323,334,338,1],[313,306,307,324,325,1],[316.7,305,307,309,332,0],[320.3,297,309,320,321,0],[323.7,303,320,322,326,0],[327,312,314,322,323,1],[331,297,299,314,315,1],[334.3,277,283,299,303,1],[337.7,248,249,283,290,1],[341.3,227,231,251,252,1],[345,226,231,253,257,0],[348.3,248,253,268,268,0],[351.7,257,267,270,279,0],[355.7,269,270,304,312,0],[359,287,304,314,330,0],[362.3,297,314,331,338,0],[365.7,322,330,348,358,0],[369.7,316,319,348,350,1],[373,317,319,353,354,0],[376.3,338,352,362,363,0],[380.3,347,352,362,373,1],[383.3,337,348,353,367,1],[387,343,344,348,352,1],[391,340,344,354,355,0],[394.3,353,354,391,394,0],[397.7,387,391,460,468,0],[401,439,460,513,523,0],[404.7,502,503,512,520,1],[408.3,493,503,515,527,0],[411.7,488,488,515,539,1],[415.7,453,455,488,495,1],[419,408,426,455,456,1],[422.3,420,425,444,457,0],[425.7,422,435,444,451,1],[429.7,406,412,437,445,1],[433,408,412,440,441,0],[436.7,427,438,440,468,1],[440.3,412,426,440,450,1],[443.7,413,426,449,452,0],[447,448,449,472,474,0],[450.3,426,427,472,482,1],[454.3,422,424,428,440,1],[457.7,409,415,425,430,1],[461,400,410,416,417,1],[465,400,403,411,412,1],[468.3,397,398,404,415,1],[471.7,397,398,426,439,0],[475,425,426,448,458,0],[479,448,448,469,470,0],[482.3,442,462,468,475,1],[485.7,457,461,463,482,0],[489.3,448,463,477,484,0],[493,475,477,487,495,0],[496.3,466,476,487,489,1],[500.3,446,465,476,477,1],[503.3,463,465,485,499,0],[507,470,477,485,486,1],[510.3,445,452,478,479,1],[514.3,426,428,452,453,1],[517.7,427,428,440,452,0],[521.3,430,439,446,447,0],[525,420,422,446,447,1],[528.3,407,422,433,434,0],[531.7,397,400,433,436,1],[535,391,394,400,405,1],[539,377,379,394,395,1],[542.3,378,379,389,405,0],[545.7,369,380,389,391,1],[549.7,368,373,380,386,1],[553,373,374,382,387,0],[556.3,378,382,397,398,0],[560,376,377,397,411,1],
[563.7,376,377,422,430,0],[567,405,406,422,431,1],[570.3,397,406,409,413,0],[574.3,400,407,409,414,0],[577.7,394,406,409,410,1],[581,401,407,415,415,0],[585,411,413,415,417,1],[588.3,395,414,417,418,0],[591.7,408,417,427,430,0],[595,412,421,427,427,1],[599,417,421,427,428,0],[602.3,426,427,431,437,0],[606,403,408,431,432,1],[609.3,387,402,408,409,1],[613,356,369,402,405,1],[616.3,369,369,417,484,0],[619.7,416,417,467,498,0],[623.7,416,426,467,468,1],[627,408,423,427,428,1],[630.3,380,423,429,438,0],[634.3,369,372,429,430,1],[637.7,333,336,372,373,1],[641,325,337,358,359,0],[644.3,348,358,383,384,0],[648.3,368,383,398,404,0],[651.7,389,398,417,420,0],[655.3,416,417,426,428,0],[659,419,420,427,429,1],[662.3,415,419,436,460,0],[665.7,415,435,459,472,0],[669,457,459,472,474,0],[673,470,472,481,506,0],[676.3,446,447,481,495,1],[679.7,445,447,478,487,0],[683.3,469,478,509,530,0],[687,471,473,509,510,1],[690.3,467,473,520,522,0],[694.3,485,496,520,533,1],[697.7,412,417,496,497,1],[701,406,407,417,422,1],[704.3,387,398,407,418,1],[708.3,334,336,398,399,1],[711.7,320,339,355,356,0],[715,316,354,366,367,0],[719,335,366,407,411,0],[722.3,391,392,407,450,1],[725.7,317,340,392,394,1],[729,288,298,340,344,1],[732.7,250,277,298,299,1],[736.3,246,275,277,307,1],[739.7,259,275,285,288,0],[743.3,264,285,292,295,0],[747,266,292,301,303,0],[750.3,284,301,305,311,0],[753.7,275,285,304,306,1],[757.7,267,285,295,318,0],[761,286,288,295,296,1],[764.3,272,283,288,300,1],[768.3,247,252,284,293,1],[771.7,248,252,279,290,0],[775,279,279,297,299,0],[778.3,280,291,297,306,1],[782.3,241,242,292,293,1],[785.7,226,236,242,248,1],[789,229,236,278,279,0],[793,269,278,290,292,0],[796.3,280,290,314,330,0],[799.7,310,314,342,354,0],[803.7,322,326,342,360,1],[807,325,327,366,367,0],[810.3,360,366,382,386,0],[814,374,382,394,398,0],[817.7,373,374,395,412,1],[821,337,339,374,375,1],[824.3,300,301,339,340,1],[828.3,288,292,301,308,1],[831.7,262,270,293,299,1],[835,267,269,277,278,0],[838.3,269,273,277,288,1],[842.3,233,248,273,274,1],[845.7,233,238,248,253,1],[849,237,238,251,252,0],[853,249,251,263,269,0],[856.3,242,251,263,265,1],[859.7,245,251,263,270,0],[863,233,256,263,264,1],[866.7,215,217,256,258,1],[870.3,196,207,218,222,1],[873.7,198,203,207,218,1],[877.3,194,202,204,218,1]
];
const line = (x, a, b, cls) => `<path class="${cls}" d="M${Math.round(x)}${cls.startsWith("wick") ? ".5" : ""} ${a}V${b}"/>`;
document.getElementById("bars").innerHTML = bars.map(([x, h, t, b, l, up]) => {
  const tone = up ? "rise" : "fall";
  return line(x - 0.5, h, l, `wick ${tone}`) + line(x, t, b, `body ${tone}`);
}).join("");
```
